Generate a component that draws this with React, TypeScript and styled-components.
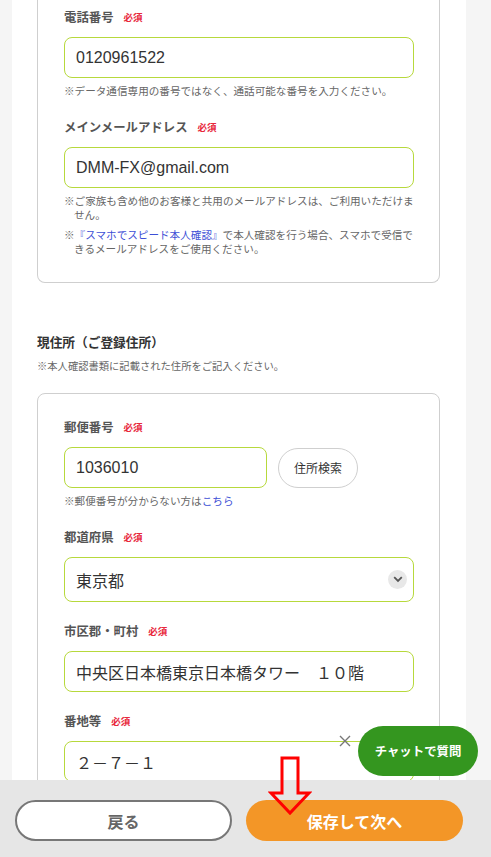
import React from "react";
import styled, { createGlobalStyle } from "styled-components";

const Global = createGlobalStyle`
  html, body { margin: 0; padding: 0; background: #f5f5f5; overflow: hidden; }
  body { font-family: "Noto Sans CJK JP", "Liberation Sans", sans-serif; color: #333; }
  * { box-sizing: border-box; }
`;

const Page = styled.div`
  margin-left: 12px;
  width: 454px;
  height: 857px;
  background: #fff;
  padding: 0 26px 0 25px;
  overflow: hidden;
`;

const Card = styled.div<{ $cut?: boolean }>`
  border: 1px solid #cfcfcf;
  border-radius: 8px;
  ${(p) => (p.$cut ? "border-top: none; border-top-left-radius: 0; border-top-right-radius: 0;" : "")}
  padding: ${(p) => (p.$cut ? "8px 25px 26px 26px" : "24px 25px 76px 26px")};
  display: flex;
  flex-direction: column;
  gap: 20px;
`;

const Field = styled.div`
  display: flex;
  flex-direction: column;
`;

const Label = styled.div`
  display: flex;
  align-items: center;
  gap: 10px;
  height: 18px;
  margin-bottom: 11px;
  font-size: 12.4px;
  font-weight: 700;
  color: #555;
`;

const Req = styled.span`
  font-size: 9.5px;
  font-weight: 700;
  color: #e8283c;
`;

const InputBox = styled.div<{ $w?: number; $h?: number }>`
  display: flex;
  align-items: center;
  justify-content: space-between;
  width: ${(p) => (p.$w ? `${p.$w}px` : "100%")};
  height: ${(p) => p.$h ?? 41}px;
  border: 1px solid #b7d93c;
  border-radius: 8px;
  padding: 0 6px 0 11px;
  font-size: 16px;
  color: #333;
`;

const Latin = styled.span`
  font-family: "Liberation Sans", Arial, sans-serif;
`;

const Hint = styled.p`
  margin: 6px 0 0;
  font-size: 10.6px;
  line-height: 14px;
  color: #666;
  padding-left: 10px;
  text-indent: -10px;
`;

const Link = styled.span`
  color: #3d4fd6;
`;

const Row = styled.div`
  display: flex;
  align-items: center;
  gap: 11px;
`;

const PillButton = styled.button`
  width: 80px;
  height: 40px;
  border: 1px solid #cfcfcf;
  border-radius: 20px;
  background: #fff;
  font-family: inherit;
  font-size: 12px;
  color: #333;
  padding: 0;
`;

const Chevron = styled.span`
  width: 19px;
  height: 19px;
  border-radius: 50%;
  background: #e8e8e8;
  display: flex;
  align-items: center;
  justify-content: center;
`;

const Section = styled.div`
  margin-top: 49px;
  margin-bottom: 20px;
`;

const SectionTitle = styled.h2`
  margin: 0;
  font-size: 12.7px;
  line-height: 20px;
  font-weight: 700;
  color: #333;
`;

const SectionNote = styled.p`
  margin: 7px 0 0;
  font-size: 10.3px;
  line-height: 14px;
  color: #666;
`;

const BottomBar = styled.div`
  position: fixed;
  left: 0;
  right: 0;
  bottom: 0;
  height: 77px;
  background: #e6e6e6;
  display: flex;
  gap: 14px;
  padding: 20px 28px 0 15px;
`;

const BarButton = styled.button<{ $primary?: boolean }>`
  width: 217px;
  height: 41px;
  border-radius: 21px;
  font-family: inherit;
  font-size: 16px;
  font-weight: 700;
  padding: 0;
  border: ${(p) => (p.$primary ? "none" : "2px solid #777")};
  background: ${(p) => (p.$primary ? "#f39627" : "#fff")};
  color: ${(p) => (p.$primary ? "#fff" : "#666")};
`;

const Chat = styled.div`
  position: fixed;
  left: 358px;
  top: 726px;
  width: 120px;
  height: 50px;
  border-radius: 25px;
  background: #34961f;
  color: #fff;
  font-size: 12.4px;
  font-weight: 700;
  display: flex;
  align-items: center;
  justify-content: center;
`;

const Close = styled.div`
  position: fixed;
  left: 339px;
  top: 728px;
  width: 12px;
  height: 12px;
`;

const Arrow = styled.svg`
  position: fixed;
  left: 268px;
  top: 755px;
`;

export default function App() {
  return (
    <>
      <Global />
      <Page>
        <Card $cut>
          <Field>
            <Label>
              電話番号<Req>必須</Req>
            </Label>
            <InputBox>
              <Latin>0120961522</Latin>
            </InputBox>
            <Hint>※データ通信専用の番号ではなく、通話可能な番号を入力ください。</Hint>
          </Field>
          <Field>
            <Label>
              メインメールアドレス<Req>必須</Req>
            </Label>
            <InputBox>
              <Latin>DMM-FX@gmail.com</Latin>
            </InputBox>
            <Hint>※ご家族も含め他のお客様と共用のメールアドレスは、ご利用いただけません。</Hint>
            <Hint>
              ※<Link>『スマホでスピード本人確認』</Link>で本人確認を行う場合、スマホで受信できるメールアドレスをご使用ください。
            </Hint>
          </Field>
        </Card>

        <Section>
          <SectionTitle>現住所（ご登録住所）</SectionTitle>
          <SectionNote>※本人確認書類に記載された住所をご記入ください。</SectionNote>
        </Section>

        <Card>
          <Field>
            <Label>
              郵便番号<Req>必須</Req>
            </Label>
            <Row>
              <InputBox $w={203}>
                <Latin>1036010</Latin>
              </InputBox>
              <PillButton>住所検索</PillButton>
            </Row>
            <Hint>
              ※郵便番号が分からない方は<Link>こちら</Link>
            </Hint>
          </Field>
          <Field>
            <Label>
              都道府県<Req>必須</Req>
            </Label>
            <InputBox $h={45}>
              <span>東京都</span>
              <Chevron>
                <svg width="10" height="7" viewBox="0 0 10 7">
                  <path d="M1.2 1.2 L5 5 L8.8 1.2" fill="none" stroke="#555" strokeWidth="1.8" />
                </svg>
              </Chevron>
            </InputBox>
          </Field>
          <Field>
            <Label>
              市区郡・町村<Req>必須</Req>
            </Label>
            <InputBox>中央区日本橋東京日本橋タワー　１０階</InputBox>
          </Field>
          <Field>
            <Label>
              番地等<Req>必須</Req>
            </Label>
            <InputBox>２－７－１</InputBox>
          </Field>
        </Card>
      </Page>

      <BottomBar>
        <BarButton>戻る</BarButton>
        <BarButton $primary>保存して次へ</BarButton>
      </BottomBar>

      <Close>
        <svg width="12" height="12" viewBox="0 0 12 12">
          <path d="M1 1 L11 11 M11 1 L1 11" stroke="#777" strokeWidth="1.4" />
        </svg>
      </Close>
      <Chat>チャットで質問</Chat>

      <Arrow width="44" height="62" viewBox="0 0 44 62">
        <path
          d="M14 3 H30 V38 H41 L22 58 L3 38 H14 Z"
          fill="none"
          stroke="#ff0000"
          strokeWidth="3"
          strokeLinejoin="miter"
        />
      </Arrow>
    </>
  );
}
